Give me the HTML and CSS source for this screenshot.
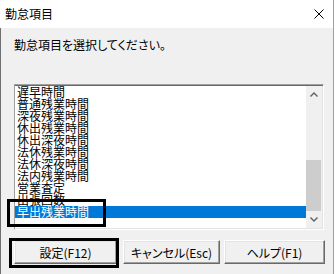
FILE: index.html
```html
<!DOCTYPE html>
<html lang="ja">
<head>
  <meta charset="UTF-8">
  <title>勤怠項目</title>
  <link rel="stylesheet" href="styles.css">
</head>
<body>

  <div class="dialog">
    <!-- Title bar -->
    <div class="titlebar">
      <span class="title">勤怠項目</span>
      <svg class="close" width="10" height="10" viewBox="0 0 10 10">
        <path d="M0.5 0.5L9.5 9.5M9.5 0.5L0.5 9.5" stroke="#000" stroke-width="1" fill="none"/>
      </svg>
    </div>

    <div class="content">
      <p class="prompt">勤怠項目を選択してください。</p>

      <!-- List of items -->
      <div class="listbox">
        <ul class="items">
          <li>遅早時間</li>
          <li>普通残業時間</li>
          <li>深夜残業時間</li>
          <li>休出残業時間</li>
          <li>休出深夜時間</li>
          <li>法休残業時間</li>
          <li>法休深夜時間</li>
          <li>法内残業時間</li>
          <li>営業査定</li>
          <li>出張回数</li>
          <li class="selected">早出残業時間</li>
        </ul>
        <div class="scrollbar">
          <div class="arrow">
            <svg width="8" height="5" viewBox="0 0 8 5"><path d="M0.5 4.5L4 1L7.5 4.5" stroke="#606060" stroke-width="1.4" fill="none"/></svg>
          </div>
          <div class="track"><div class="thumb"></div></div>
          <div class="arrow">
            <svg width="8" height="5" viewBox="0 0 8 5"><path d="M0.5 0.5L4 4L7.5 0.5" stroke="#606060" stroke-width="1.4" fill="none"/></svg>
          </div>
        </div>
      </div>

      <div class="buttons">
        <button class="btn btn-ok">設定(F12)</button>
        <button class="btn btn-cancel">キャンセル(Esc)</button>
        <button class="btn btn-help">ヘルプ(F1)</button>
      </div>
    </div>

    <!-- Highlight marks drawn over the dialog -->
    <div class="mark mark-item"></div>
    <div class="mark mark-button"></div>
  </div>

</body>
</html>
```

FILE: styles.css
```css
* {
  margin: 0;
  padding: 0;
  box-sizing: border-box;
}

body {
  width: 336px;
  height: 274px;
  overflow: hidden;
  background-color: #fff;
  font-family: "Noto Sans CJK JP", sans-serif;
  font-size: 12px;
  color: #000;
}

.dialog {
  position: relative;
  width: 334px;
  height: 274px;
  display: flex;
  flex-direction: column;
  background-color: #f0f0f0;
  border-right: 1px solid #a0a0a0;
}

.titlebar {
  height: 28px;
  background-color: #fff;
  display: flex;
  align-items: center;
  justify-content: space-between;
  padding: 0 9px 0 5px;
}

.title {
  font-size: 12px;
  line-height: 14px;
}

.content {
  flex: 1;
  border-left: 1px solid #6e6e6e;
  padding: 10px 0 0 13px;
}

.prompt {
  line-height: 14px;
  margin-bottom: 32px;
  font-feature-settings: "palt";
}

.listbox {
  width: 310px;
  height: 146px;
  display: flex;
  background-color: #fff;
  border-top: 1px solid #a0a0a0;
  border-left: 1px solid #a0a0a0;
  border-right: 1px solid #fff;
  border-bottom: 1px solid #fff;
  box-shadow: inset 0 1px 0 #696969, inset 0 -1px 0 #e3e3e3, inset -1px 0 0 #e3e3e3;
  padding: 1px 1px 1px 0;
}

.items {
  flex: 1;
  list-style: none;
}

.items li {
  height: 12px;
  line-height: 12px;
  padding-left: 2px;
  white-space: nowrap;
}

.items li.selected {
  background-color: #0078d7;
  color: #fff;
}

.scrollbar {
  width: 16px;
  display: flex;
  flex-direction: column;
  background-color: #f0f0f0;
}

.arrow {
  height: 17px;
  display: flex;
  align-items: center;
  justify-content: center;
}

.track {
  flex: 1;
  display: flex;
  flex-direction: column;
  justify-content: flex-end;
}

.thumb {
  height: 51px;
  margin-right: 1px;
  background-color: #cdcdcd;
}

.buttons {
  display: flex;
  margin-top: 10px;
}

.btn {
  height: 24px;
  font-family: inherit;
  font-size: 12px;
  color: #000;
  background-color: #f0f0f0;
  border-top: 1px solid #fff;
  border-left: 1px solid #fff;
  border-right: 1px solid #696969;
  border-bottom: 1px solid #696969;
  box-shadow: inset -1px -1px 0 #a0a0a0, inset 1px 1px 0 #e3e3e3;
  font-feature-settings: "palt";
}

.btn-ok {
  width: 103px;
}

.btn-cancel {
  width: 97px;
  margin-left: 6px;
}

.btn-help {
  width: 101px;
  margin-left: 4px;
}

.mark {
  position: absolute;
  border: 3px solid #000;
}

.mark-item {
  left: 7px;
  top: 199px;
  width: 99px;
  height: 28px;
}

.mark-button {
  left: 9px;
  top: 238px;
  width: 110px;
  height: 30px;
}
```
